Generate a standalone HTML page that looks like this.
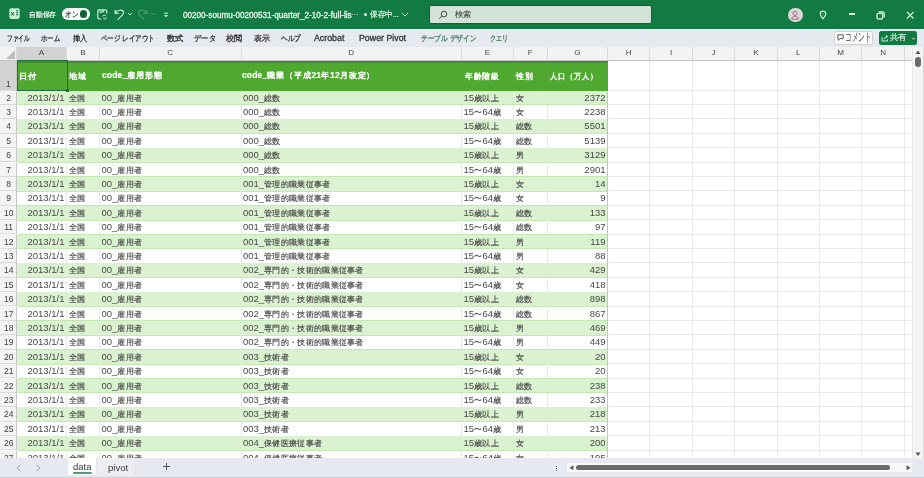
<!DOCTYPE html>
<html lang="ja"><head><meta charset="utf-8"><title>Excel</title>
<style>
*{box-sizing:border-box;margin:0;padding:0}
html,body{width:924px;height:478px;overflow:hidden;background:#fff}
body{position:relative;font-family:"Liberation Sans",sans-serif;color:#262626}
.a{position:absolute}
.t{position:absolute;white-space:nowrap;line-height:1;transform-origin:0 0}
.ch{position:absolute;top:47px;height:13.5px;background:#f3f3f4;border-right:1px solid #dadada;border-bottom:1px solid #c6c6c6;font-size:8px;color:#444;text-align:center;line-height:11.8px}
.rh{position:absolute;left:0;width:17.3px;background:#f4f4f4;border-bottom:1px solid #dadada;border-right:1px solid #c6c6c6;font-size:8.5px;color:#404040;text-align:center;padding-left:1px}
.c{position:absolute;font-size:9.5px;white-space:nowrap;overflow:hidden;line-height:14px;padding:0 2.5px 0 1.5px;color:#484848}
.c .j{font-size:8.2px;letter-spacing:0.3px;color:#444;-webkit-text-stroke:0.15px #444}
.r{text-align:right}
body{filter:blur(0.3px)}
</style></head><body>

<div class="a" style="left:0;top:0;width:924px;height:28.5px;background:#127b44"></div>
<div class="a" style="left:0;top:26.8px;width:924px;height:1.7px;background:#1b6c42"></div>
<div class="a" style="left:0;top:28.5px;width:924px;height:1.6px;background:#d6f6e7"></div>
<div class="a" style="left:0;top:30.1px;width:924px;height:16.9px;background:#e7e9f0"></div>
<svg class="a" style="left:9px;top:8.3px" width="11" height="11.2" viewBox="0 0 11 11.2"><rect x="0.3" y="0.3" width="10.4" height="10.6" rx="1.8" fill="#c4f0d4"/><path d="M2.2 4.2L4.8 7.6M4.8 4.2L2.2 7.6" stroke="#1b4f30" stroke-width="1"/><path d="M7 2.8h2.2M7 4.8h2.2M7 6.8h2.2" stroke="#1f6a40" stroke-width="1.1"/></svg>
<div class="t" style="left:29.27px;top:12.1px;font-size:7.14px;font-weight:400;color:#e3f4e8;transform:scaleX(0.97);-webkit-text-stroke:0.25px #e3f4e8">自動保存</div>
<div class="a" style="left:62px;top:8.4px;width:28px;height:11.3px;border-radius:6px;background:#fbfdfc"></div>
<div class="t" style="left:64.58px;top:10.55px;font-size:8.04px;font-weight:400;color:#2b2b2b;transform:scaleX(0.83);-webkit-text-stroke:0.15px #2b2b2b">オン</div>
<div class="a" style="left:79.6px;top:10.4px;width:7.4px;height:7.4px;border-radius:50%;background:#0f5f34"></div>
<svg class="a" style="left:97px;top:8.5px" width="11" height="11" viewBox="0 0 11 11" fill="none" stroke="#cdeed8" stroke-width="1.2"><path d="M4.2 10H2.2A1.4 1.4 0 0 1 0.8 8.6V2A1.4 1.4 0 0 1 2.2 0.8H8.4A1.4 1.4 0 0 1 9.8 2.2V4.6"/><path d="M3 1v2.4h2.2V1.2M6.6 1.2v2.2" stroke-width="1"/><path d="M5.6 7.6a1.9 1.9 0 0 1 3.4-0.6M9.6 8.4a1.9 1.9 0 0 1-3.4 0.8" stroke-width="1"/></svg>
<svg class="a" style="left:114px;top:9px" width="11" height="11" viewBox="0 0 11 11" fill="none" stroke="#cdeed8" stroke-width="1.25" stroke-linecap="round" stroke-linejoin="round"><path d="M1.2 1.3V4.3H4.2"/><path d="M1.5 4C3 1.2 8.3 -0.2 9.6 3C10.2 4.8 6 8.5 4 10.2"/></svg>
<svg class="a" style="left:127px;top:12px" width="6" height="4" viewBox="0 0 6 4" fill="none" stroke="#cdeed8" stroke-width="1"><path d="M1 1l2 2 2-2"/></svg>
<svg class="a" style="left:137px;top:9px" width="11" height="11" viewBox="0 0 11 11" fill="none" stroke="#4c9c6c" stroke-width="1.2" stroke-linecap="round" stroke-linejoin="round"><path d="M9.8 1.3V4.3H6.8"/><path d="M9.5 4C8 1.2 2.7 -0.2 1.4 3C0.8 4.8 5 8.5 7 10.2"/></svg>
<svg class="a" style="left:150px;top:12px" width="6" height="4" viewBox="0 0 6 4" fill="none" stroke="#4c9c6c" stroke-width="1"><path d="M1 1l2 2 2-2"/></svg>
<svg class="a" style="left:162.5px;top:11.5px" width="6" height="6" viewBox="0 0 6 6"><path d="M1 1.2h4" stroke="#def2e5" stroke-width="0.9"/><path d="M1 3h4L3 5.4z" fill="#def2e5"/></svg>
<div class="t" style="left:182.76px;top:11.05px;font-size:8.3px;font-weight:400;color:#e8f6ec;transform:scaleX(0.98);-webkit-text-stroke:0.3px #e8f6ec">00200-soumu-00200531-quarter_2-10-2-full-lis</div>
<div class="t" style="left:351.09px;top:9.75px;font-size:8.3px;font-weight:400;color:#e3f4e8;transform:scaleX(0.91);">···</div>
<div class="a" style="left:363.5px;top:12.8px;width:3px;height:3px;border-radius:50%;background:#e3f4e8"></div>
<div class="t" style="left:370.24px;top:10.8px;font-size:7.55px;font-weight:400;color:#e3f4e8;transform:scaleX(0.95);-webkit-text-stroke:0.2px #e3f4e8">保存中...</div>
<svg class="a" style="left:401px;top:11.5px" width="8" height="5" viewBox="0 0 8 5" fill="none" stroke="#e3f4e8" stroke-width="0.9"><path d="M1 1l3 3 3-3"/></svg>
<div class="a" style="left:429px;top:4.5px;width:222.5px;height:19.5px;background:#d3e3d8;border:1px solid #0b6434;border-radius:2px"></div>
<svg class="a" style="left:438px;top:9.5px" width="10" height="10" viewBox="0 0 10 10" fill="none" stroke="#3a3a3a" stroke-width="0.9"><circle cx="6" cy="4" r="2.8"/><path d="M4 6L1.2 8.8"/></svg>
<div class="t" style="left:455px;top:11.1px;font-size:7.89px;font-weight:400;color:#4a4a4a;transform:scaleX(1.02);-webkit-text-stroke:0.1px #4a4a4a">検索</div>
<div class="a" style="left:787.8px;top:7.6px;width:14.8px;height:14.8px;border-radius:50%;background:#dcd6d8"></div>
<svg class="a" style="left:789px;top:9px" width="12" height="12" viewBox="0 0 12 12" fill="none" stroke="#a0607e" stroke-width="0.9"><circle cx="6" cy="4.3" r="2.1"/><path d="M2.6 10.2c0.4-2 1.8-3 3.4-3s3 1 3.4 3z"/></svg>
<svg class="a" style="left:819px;top:10px" width="8" height="10" viewBox="0 0 8 10" fill="none" stroke="#cdeed8" stroke-width="1.25"><path d="M4 8.8C2.2 6.8 1.2 5.2 1.2 3.8a2.8 2.8 0 0 1 5.6 0c0 1.4-1 3-2.8 5z"/><circle cx="4" cy="3.8" r="0.5" fill="#cdeed8" stroke="none"/></svg>
<div class="a" style="left:848.6px;top:13.4px;width:6.4px;height:1.5px;background:#cdeed8"></div>
<svg class="a" style="left:876px;top:10.5px" width="9" height="9" viewBox="0 0 9 9" fill="none" stroke="#cdeed8" stroke-width="1.4"><rect x="1" y="2.4" width="5.6" height="5.6" rx="1.6"/><path d="M2.6 1h4a1.6 1.6 0 0 1 1.6 1.6v4"/></svg>
<svg class="a" style="left:905.5px;top:10.6px" width="8.5" height="8.5" viewBox="0 0 8.5 8.5" fill="none" stroke="#cdeed8" stroke-width="1.3"><path d="M1 1l6.5 6.5M7.5 1L1 7.5"/></svg>
<div class="t" style="left:7.28px;top:34.95px;font-size:8.13px;font-weight:400;color:#333;transform:scaleX(0.7);-webkit-text-stroke:0.3px #333">ファイル</div>
<div class="t" style="left:40.7px;top:34.95px;font-size:8.13px;font-weight:400;color:#333;transform:scaleX(0.8);-webkit-text-stroke:0.3px #333">ホーム</div>
<div class="t" style="left:72.92px;top:34.95px;font-size:8.13px;font-weight:400;color:#333;transform:scaleX(0.89);-webkit-text-stroke:0.3px #333">挿入</div>
<div class="t" style="left:101.3px;top:34.95px;font-size:8.13px;font-weight:400;color:#333;transform:scaleX(0.81);-webkit-text-stroke:0.3px #333">ページ レイアウト</div>
<div class="t" style="left:167.3px;top:34.95px;font-size:8.13px;font-weight:400;color:#333;transform:scaleX(1.03);-webkit-text-stroke:0.3px #333">数式</div>
<div class="t" style="left:193.97px;top:34.95px;font-size:8.13px;font-weight:400;color:#333;transform:scaleX(0.91);-webkit-text-stroke:0.3px #333">データ</div>
<div class="t" style="left:226.45px;top:34.95px;font-size:8.13px;font-weight:400;color:#333;transform:scaleX(1.01);-webkit-text-stroke:0.3px #333">校閲</div>
<div class="t" style="left:253.5px;top:34.95px;font-size:8.13px;font-weight:400;color:#333;-webkit-text-stroke:0.3px #333">表示</div>
<div class="t" style="left:280.91px;top:34.95px;font-size:8.13px;font-weight:400;color:#333;transform:scaleX(0.83);-webkit-text-stroke:0.3px #333">ヘルプ</div>
<div class="t" style="left:314.25px;top:34.4px;font-size:8.72px;font-weight:400;color:#333;transform:scaleX(1.01);-webkit-text-stroke:0.3px #333">Acrobat</div>
<div class="t" style="left:358.99px;top:34.4px;font-size:8.72px;font-weight:400;color:#333;transform:scaleX(1.01);-webkit-text-stroke:0.3px #333">Power Pivot</div>
<div class="t" style="left:420.98px;top:34.95px;font-size:8.13px;font-weight:400;color:#3d7858;transform:scaleX(0.84);-webkit-text-stroke:0.3px #3d7858">テーブル デザイン</div>
<div class="t" style="left:490.12px;top:34.95px;font-size:8.13px;font-weight:400;color:#3d7858;transform:scaleX(0.76);-webkit-text-stroke:0.3px #3d7858">クエリ</div>
<div class="a" style="left:833.5px;top:31px;width:39.5px;height:13.6px;background:#fcfcfc;border:1px solid #d2d2d2;border-radius:2.5px"></div>
<svg class="a" style="left:836.5px;top:33.5px" width="7" height="8" viewBox="0 0 7 8" fill="none" stroke="#444" stroke-width="0.9"><path d="M0.8 0.8h5.4v3.8H3L1.2 6.4V4.6H0.8z"/></svg>
<div class="t" style="left:844.93px;top:31.45px;font-size:12.18px;font-weight:400;color:#444;transform:scaleX(0.55);">コメント</div>
<div class="a" style="left:878.5px;top:31px;width:38.3px;height:13.6px;background:#107c41;border-radius:2.5px"></div>
<svg class="a" style="left:881px;top:33.5px" width="8" height="8" viewBox="0 0 8 8" fill="none" stroke="#e9f6ee" stroke-width="0.9"><path d="M1 3.2v3.8h5.6V5.4"/><path d="M3 5.2c0.3-1.6 1.4-2.6 3.4-2.6M5 1l1.6 1.6L5 4.2"/></svg>
<div class="t" style="left:890px;top:34.45px;font-size:7.52px;font-weight:400;color:#e2f3e8;transform:scaleX(1.05);-webkit-text-stroke:0.15px #e2f3e8">共有</div>
<svg class="a" style="left:910.5px;top:36.5px" width="5" height="3.5" viewBox="0 0 5 3.5" fill="none" stroke="#e9f6ee" stroke-width="0.8"><path d="M0.8 0.8l1.7 1.7 1.7-1.7"/></svg>
<div class="ch" style="left:0;width:17px"></div>
<div class="a" style="left:6.3px;top:49.5px;width:0;height:0;border-left:9.4px solid transparent;border-bottom:9.4px solid #bcbcbc"></div>
<div class="ch" style="left:17px;width:50px;background:#d2d2d2">A</div>
<div class="ch" style="left:67px;width:33px;background:#f3f3f4">B</div>
<div class="ch" style="left:100px;width:141.5px;background:#f3f3f4">C</div>
<div class="ch" style="left:241.5px;width:220.5px;background:#f3f3f4">D</div>
<div class="ch" style="left:462px;width:52px;background:#f3f3f4">E</div>
<div class="ch" style="left:514px;width:33.5px;background:#f3f3f4">F</div>
<div class="ch" style="left:547.5px;width:60.5px;background:#f3f3f4">G</div>
<div class="ch" style="left:608px;width:42.4px;background:#f3f3f4">H</div>
<div class="ch" style="left:650.4px;width:42.4px;background:#f3f3f4">I</div>
<div class="ch" style="left:692.8px;width:42.4px;background:#f3f3f4">J</div>
<div class="ch" style="left:735.2px;width:42.4px;background:#f3f3f4">K</div>
<div class="ch" style="left:777.6px;width:42.4px;background:#f3f3f4">L</div>
<div class="ch" style="left:820px;width:42.4px;background:#f3f3f4">M</div>
<div class="ch" style="left:862.4px;width:42.4px;background:#f3f3f4">N</div>
<div class="ch" style="left:904.6px;width:7.4px;border-right:none"></div>
<div class="a" style="left:17px;top:60.5px;width:895px;height:397.5px;background:#fff;overflow:hidden">
<div class="a" style="left:590px;top:0;width:1px;height:398px;background:#e9e9e9"></div>
<div class="a" style="left:632.4px;top:0;width:1px;height:398px;background:#e9e9e9"></div>
<div class="a" style="left:674.8px;top:0;width:1px;height:398px;background:#e9e9e9"></div>
<div class="a" style="left:717.2px;top:0;width:1px;height:398px;background:#e9e9e9"></div>
<div class="a" style="left:759.6px;top:0;width:1px;height:398px;background:#e9e9e9"></div>
<div class="a" style="left:802px;top:0;width:1px;height:398px;background:#e9e9e9"></div>
<div class="a" style="left:844.4px;top:0;width:1px;height:398px;background:#e9e9e9"></div>
<div class="a" style="left:886.8px;top:0;width:1px;height:398px;background:#e9e9e9"></div>
<div class="a" style="left:591px;top:29px;width:304px;height:1px;background:#e9e9e9"></div>
<div class="a" style="left:591px;top:43.4px;width:304px;height:1px;background:#e9e9e9"></div>
<div class="a" style="left:591px;top:57.8px;width:304px;height:1px;background:#e9e9e9"></div>
<div class="a" style="left:591px;top:72.2px;width:304px;height:1px;background:#e9e9e9"></div>
<div class="a" style="left:591px;top:86.6px;width:304px;height:1px;background:#e9e9e9"></div>
<div class="a" style="left:591px;top:101px;width:304px;height:1px;background:#e9e9e9"></div>
<div class="a" style="left:591px;top:115.4px;width:304px;height:1px;background:#e9e9e9"></div>
<div class="a" style="left:591px;top:129.8px;width:304px;height:1px;background:#e9e9e9"></div>
<div class="a" style="left:591px;top:144.2px;width:304px;height:1px;background:#e9e9e9"></div>
<div class="a" style="left:591px;top:158.6px;width:304px;height:1px;background:#e9e9e9"></div>
<div class="a" style="left:591px;top:173px;width:304px;height:1px;background:#e9e9e9"></div>
<div class="a" style="left:591px;top:187.4px;width:304px;height:1px;background:#e9e9e9"></div>
<div class="a" style="left:591px;top:201.8px;width:304px;height:1px;background:#e9e9e9"></div>
<div class="a" style="left:591px;top:216.2px;width:304px;height:1px;background:#e9e9e9"></div>
<div class="a" style="left:591px;top:230.6px;width:304px;height:1px;background:#e9e9e9"></div>
<div class="a" style="left:591px;top:245px;width:304px;height:1px;background:#e9e9e9"></div>
<div class="a" style="left:591px;top:259.4px;width:304px;height:1px;background:#e9e9e9"></div>
<div class="a" style="left:591px;top:273.8px;width:304px;height:1px;background:#e9e9e9"></div>
<div class="a" style="left:591px;top:288.2px;width:304px;height:1px;background:#e9e9e9"></div>
<div class="a" style="left:591px;top:302.6px;width:304px;height:1px;background:#e9e9e9"></div>
<div class="a" style="left:591px;top:317px;width:304px;height:1px;background:#e9e9e9"></div>
<div class="a" style="left:591px;top:331.4px;width:304px;height:1px;background:#e9e9e9"></div>
<div class="a" style="left:591px;top:345.8px;width:304px;height:1px;background:#e9e9e9"></div>
<div class="a" style="left:591px;top:360.2px;width:304px;height:1px;background:#e9e9e9"></div>
<div class="a" style="left:591px;top:374.6px;width:304px;height:1px;background:#e9e9e9"></div>
<div class="a" style="left:591px;top:389px;width:304px;height:1px;background:#e9e9e9"></div>
<div class="a" style="left:591px;top:403.4px;width:304px;height:1px;background:#e9e9e9"></div>
<div class="a" style="left:591px;top:417.8px;width:304px;height:1px;background:#e9e9e9"></div>
</div>
<div class="rh" style="top:60.5px;height:30px;background:#d2d2d2;line-height:1"><span class="t" style="left:6px;top:19px">1</span></div>
<div class="rh" style="top:90.5px;height:14.4px;line-height:14px">2</div>
<div class="rh" style="top:104.9px;height:14.4px;line-height:14px">3</div>
<div class="rh" style="top:119.3px;height:14.4px;line-height:14px">4</div>
<div class="rh" style="top:133.7px;height:14.4px;line-height:14px">5</div>
<div class="rh" style="top:148.1px;height:14.4px;line-height:14px">6</div>
<div class="rh" style="top:162.5px;height:14.4px;line-height:14px">7</div>
<div class="rh" style="top:176.9px;height:14.4px;line-height:14px">8</div>
<div class="rh" style="top:191.3px;height:14.4px;line-height:14px">9</div>
<div class="rh" style="top:205.7px;height:14.4px;line-height:14px">10</div>
<div class="rh" style="top:220.1px;height:14.4px;line-height:14px">11</div>
<div class="rh" style="top:234.5px;height:14.4px;line-height:14px">12</div>
<div class="rh" style="top:248.9px;height:14.4px;line-height:14px">13</div>
<div class="rh" style="top:263.3px;height:14.4px;line-height:14px">14</div>
<div class="rh" style="top:277.7px;height:14.4px;line-height:14px">15</div>
<div class="rh" style="top:292.1px;height:14.4px;line-height:14px">16</div>
<div class="rh" style="top:306.5px;height:14.4px;line-height:14px">17</div>
<div class="rh" style="top:320.9px;height:14.4px;line-height:14px">18</div>
<div class="rh" style="top:335.3px;height:14.4px;line-height:14px">19</div>
<div class="rh" style="top:349.7px;height:14.4px;line-height:14px">20</div>
<div class="rh" style="top:364.1px;height:14.4px;line-height:14px">21</div>
<div class="rh" style="top:378.5px;height:14.4px;line-height:14px">22</div>
<div class="rh" style="top:392.9px;height:14.4px;line-height:14px">23</div>
<div class="rh" style="top:407.3px;height:14.4px;line-height:14px">24</div>
<div class="rh" style="top:421.7px;height:14.4px;line-height:14px">25</div>
<div class="rh" style="top:436.1px;height:14.4px;line-height:14px">26</div>
<div class="rh" style="top:450.5px;height:14.4px;line-height:14px">27</div>
<div class="a" style="left:17px;top:60.5px;width:591px;height:30px;background:#4fa82f"></div>
<div class="a" style="left:17px;top:61px;width:591px;height:1.6px;background:#3f8f2c"></div>
<div class="t" style="left:18.76px;top:71.8px;font-size:8.6px;font-weight:700;color:#fff;transform:scaleX(1.04);-webkit-text-stroke:0.15px #fff"><span style="font-size:7.7px;letter-spacing:0.8px;font-weight:400;-webkit-text-stroke:0.45px #fff">日付</span></div>
<div class="t" style="left:68.95px;top:72.05px;font-size:8.6px;font-weight:700;color:#fff;-webkit-text-stroke:0.15px #fff"><span style="font-size:7.7px;letter-spacing:0.8px;font-weight:400;-webkit-text-stroke:0.45px #fff">地域</span></div>
<div class="t" style="left:101.95px;top:71.05px;font-size:8.6px;font-weight:700;color:#fff;transform:scaleX(1.01);-webkit-text-stroke:0.15px #fff">code_<span style="font-size:7.7px;letter-spacing:0.8px;font-weight:400;-webkit-text-stroke:0.45px #fff">雇用形態</span></div>
<div class="t" style="left:242.25px;top:71.05px;font-size:8.6px;font-weight:700;color:#fff;transform:scaleX(1.01);-webkit-text-stroke:0.15px #fff">code_<span style="font-size:7.7px;letter-spacing:0.8px;font-weight:400;-webkit-text-stroke:0.45px #fff">職業（平成</span>21<span style="font-size:7.7px;letter-spacing:0.8px;font-weight:400;-webkit-text-stroke:0.45px #fff">年</span>12<span style="font-size:7.7px;letter-spacing:0.8px;font-weight:400;-webkit-text-stroke:0.45px #fff">月改定）</span></div>
<div class="t" style="left:464.94px;top:71.8px;font-size:8.6px;font-weight:700;color:#fff;transform:scaleX(0.98);-webkit-text-stroke:0.15px #fff"><span style="font-size:7.7px;letter-spacing:0.8px;font-weight:400;-webkit-text-stroke:0.45px #fff">年齢階級</span></div>
<div class="t" style="left:516.19px;top:71.8px;font-size:8.6px;font-weight:700;color:#fff;transform:scaleX(0.98);-webkit-text-stroke:0.15px #fff"><span style="font-size:7.7px;letter-spacing:0.8px;font-weight:400;-webkit-text-stroke:0.45px #fff">性別</span></div>
<div class="t" style="left:549.72px;top:71.8px;font-size:8.6px;font-weight:700;color:#fff;transform:scaleX(0.9);-webkit-text-stroke:0.15px #fff"><span style="font-size:7.7px;letter-spacing:0.8px;font-weight:400;-webkit-text-stroke:0.45px #fff">人口（万人）</span></div>
<div class="a" style="left:17px;top:90.5px;width:591px;height:14.4px;background:#daf2d0"></div>
<div class="a" style="left:17px;top:104.4px;width:591px;height:1px;background:#c3e8b3"></div>
<div class="c r" style="left:17px;top:90.5px;width:50px">2013/1/1</div>
<div class="c " style="left:67px;top:90.5px;width:33px"><span class="j">全国</span></div>
<div class="c " style="left:100px;top:90.5px;width:141.5px">00_<span class="j">雇用者</span></div>
<div class="c " style="left:241.5px;top:90.5px;width:220.5px">000_<span class="j">総数</span></div>
<div class="c " style="left:462px;top:90.5px;width:52px">15<span class="j">歳以上</span></div>
<div class="c " style="left:514px;top:90.5px;width:33.5px"><span class="j">女</span></div>
<div class="c r" style="left:547.5px;top:90.5px;width:60.5px">2372</div>
<div class="a" style="left:66px;top:104.9px;width:1px;height:14.4px;background:#e9e9e9"></div>
<div class="a" style="left:99px;top:104.9px;width:1px;height:14.4px;background:#e9e9e9"></div>
<div class="a" style="left:240.5px;top:104.9px;width:1px;height:14.4px;background:#e9e9e9"></div>
<div class="a" style="left:461px;top:104.9px;width:1px;height:14.4px;background:#e9e9e9"></div>
<div class="a" style="left:513px;top:104.9px;width:1px;height:14.4px;background:#e9e9e9"></div>
<div class="a" style="left:546.5px;top:104.9px;width:1px;height:14.4px;background:#e9e9e9"></div>
<div class="a" style="left:17px;top:118.8px;width:591px;height:1px;background:#c3e8b3"></div>
<div class="c r" style="left:17px;top:104.9px;width:50px">2013/1/1</div>
<div class="c " style="left:67px;top:104.9px;width:33px"><span class="j">全国</span></div>
<div class="c " style="left:100px;top:104.9px;width:141.5px">00_<span class="j">雇用者</span></div>
<div class="c " style="left:241.5px;top:104.9px;width:220.5px">000_<span class="j">総数</span></div>
<div class="c " style="left:462px;top:104.9px;width:52px">15<span class="j">〜</span>64<span class="j">歳</span></div>
<div class="c " style="left:514px;top:104.9px;width:33.5px"><span class="j">女</span></div>
<div class="c r" style="left:547.5px;top:104.9px;width:60.5px">2238</div>
<div class="a" style="left:17px;top:119.3px;width:591px;height:14.4px;background:#daf2d0"></div>
<div class="a" style="left:17px;top:133.2px;width:591px;height:1px;background:#c3e8b3"></div>
<div class="c r" style="left:17px;top:119.3px;width:50px">2013/1/1</div>
<div class="c " style="left:67px;top:119.3px;width:33px"><span class="j">全国</span></div>
<div class="c " style="left:100px;top:119.3px;width:141.5px">00_<span class="j">雇用者</span></div>
<div class="c " style="left:241.5px;top:119.3px;width:220.5px">000_<span class="j">総数</span></div>
<div class="c " style="left:462px;top:119.3px;width:52px">15<span class="j">歳以上</span></div>
<div class="c " style="left:514px;top:119.3px;width:33.5px"><span class="j">総数</span></div>
<div class="c r" style="left:547.5px;top:119.3px;width:60.5px">5501</div>
<div class="a" style="left:66px;top:133.7px;width:1px;height:14.4px;background:#e9e9e9"></div>
<div class="a" style="left:99px;top:133.7px;width:1px;height:14.4px;background:#e9e9e9"></div>
<div class="a" style="left:240.5px;top:133.7px;width:1px;height:14.4px;background:#e9e9e9"></div>
<div class="a" style="left:461px;top:133.7px;width:1px;height:14.4px;background:#e9e9e9"></div>
<div class="a" style="left:513px;top:133.7px;width:1px;height:14.4px;background:#e9e9e9"></div>
<div class="a" style="left:546.5px;top:133.7px;width:1px;height:14.4px;background:#e9e9e9"></div>
<div class="a" style="left:17px;top:147.6px;width:591px;height:1px;background:#c3e8b3"></div>
<div class="c r" style="left:17px;top:133.7px;width:50px">2013/1/1</div>
<div class="c " style="left:67px;top:133.7px;width:33px"><span class="j">全国</span></div>
<div class="c " style="left:100px;top:133.7px;width:141.5px">00_<span class="j">雇用者</span></div>
<div class="c " style="left:241.5px;top:133.7px;width:220.5px">000_<span class="j">総数</span></div>
<div class="c " style="left:462px;top:133.7px;width:52px">15<span class="j">〜</span>64<span class="j">歳</span></div>
<div class="c " style="left:514px;top:133.7px;width:33.5px"><span class="j">総数</span></div>
<div class="c r" style="left:547.5px;top:133.7px;width:60.5px">5139</div>
<div class="a" style="left:17px;top:148.1px;width:591px;height:14.4px;background:#daf2d0"></div>
<div class="a" style="left:17px;top:162px;width:591px;height:1px;background:#c3e8b3"></div>
<div class="c r" style="left:17px;top:148.1px;width:50px">2013/1/1</div>
<div class="c " style="left:67px;top:148.1px;width:33px"><span class="j">全国</span></div>
<div class="c " style="left:100px;top:148.1px;width:141.5px">00_<span class="j">雇用者</span></div>
<div class="c " style="left:241.5px;top:148.1px;width:220.5px">000_<span class="j">総数</span></div>
<div class="c " style="left:462px;top:148.1px;width:52px">15<span class="j">歳以上</span></div>
<div class="c " style="left:514px;top:148.1px;width:33.5px"><span class="j">男</span></div>
<div class="c r" style="left:547.5px;top:148.1px;width:60.5px">3129</div>
<div class="a" style="left:66px;top:162.5px;width:1px;height:14.4px;background:#e9e9e9"></div>
<div class="a" style="left:99px;top:162.5px;width:1px;height:14.4px;background:#e9e9e9"></div>
<div class="a" style="left:240.5px;top:162.5px;width:1px;height:14.4px;background:#e9e9e9"></div>
<div class="a" style="left:461px;top:162.5px;width:1px;height:14.4px;background:#e9e9e9"></div>
<div class="a" style="left:513px;top:162.5px;width:1px;height:14.4px;background:#e9e9e9"></div>
<div class="a" style="left:546.5px;top:162.5px;width:1px;height:14.4px;background:#e9e9e9"></div>
<div class="a" style="left:17px;top:176.4px;width:591px;height:1px;background:#c3e8b3"></div>
<div class="c r" style="left:17px;top:162.5px;width:50px">2013/1/1</div>
<div class="c " style="left:67px;top:162.5px;width:33px"><span class="j">全国</span></div>
<div class="c " style="left:100px;top:162.5px;width:141.5px">00_<span class="j">雇用者</span></div>
<div class="c " style="left:241.5px;top:162.5px;width:220.5px">000_<span class="j">総数</span></div>
<div class="c " style="left:462px;top:162.5px;width:52px">15<span class="j">〜</span>64<span class="j">歳</span></div>
<div class="c " style="left:514px;top:162.5px;width:33.5px"><span class="j">男</span></div>
<div class="c r" style="left:547.5px;top:162.5px;width:60.5px">2901</div>
<div class="a" style="left:17px;top:176.9px;width:591px;height:14.4px;background:#daf2d0"></div>
<div class="a" style="left:17px;top:190.8px;width:591px;height:1px;background:#c3e8b3"></div>
<div class="c r" style="left:17px;top:176.9px;width:50px">2013/1/1</div>
<div class="c " style="left:67px;top:176.9px;width:33px"><span class="j">全国</span></div>
<div class="c " style="left:100px;top:176.9px;width:141.5px">00_<span class="j">雇用者</span></div>
<div class="c " style="left:241.5px;top:176.9px;width:220.5px">001_<span class="j">管理的職業従事者</span></div>
<div class="c " style="left:462px;top:176.9px;width:52px">15<span class="j">歳以上</span></div>
<div class="c " style="left:514px;top:176.9px;width:33.5px"><span class="j">女</span></div>
<div class="c r" style="left:547.5px;top:176.9px;width:60.5px">14</div>
<div class="a" style="left:66px;top:191.3px;width:1px;height:14.4px;background:#e9e9e9"></div>
<div class="a" style="left:99px;top:191.3px;width:1px;height:14.4px;background:#e9e9e9"></div>
<div class="a" style="left:240.5px;top:191.3px;width:1px;height:14.4px;background:#e9e9e9"></div>
<div class="a" style="left:461px;top:191.3px;width:1px;height:14.4px;background:#e9e9e9"></div>
<div class="a" style="left:513px;top:191.3px;width:1px;height:14.4px;background:#e9e9e9"></div>
<div class="a" style="left:546.5px;top:191.3px;width:1px;height:14.4px;background:#e9e9e9"></div>
<div class="a" style="left:17px;top:205.2px;width:591px;height:1px;background:#c3e8b3"></div>
<div class="c r" style="left:17px;top:191.3px;width:50px">2013/1/1</div>
<div class="c " style="left:67px;top:191.3px;width:33px"><span class="j">全国</span></div>
<div class="c " style="left:100px;top:191.3px;width:141.5px">00_<span class="j">雇用者</span></div>
<div class="c " style="left:241.5px;top:191.3px;width:220.5px">001_<span class="j">管理的職業従事者</span></div>
<div class="c " style="left:462px;top:191.3px;width:52px">15<span class="j">〜</span>64<span class="j">歳</span></div>
<div class="c " style="left:514px;top:191.3px;width:33.5px"><span class="j">女</span></div>
<div class="c r" style="left:547.5px;top:191.3px;width:60.5px">9</div>
<div class="a" style="left:17px;top:205.7px;width:591px;height:14.4px;background:#daf2d0"></div>
<div class="a" style="left:17px;top:219.6px;width:591px;height:1px;background:#c3e8b3"></div>
<div class="c r" style="left:17px;top:205.7px;width:50px">2013/1/1</div>
<div class="c " style="left:67px;top:205.7px;width:33px"><span class="j">全国</span></div>
<div class="c " style="left:100px;top:205.7px;width:141.5px">00_<span class="j">雇用者</span></div>
<div class="c " style="left:241.5px;top:205.7px;width:220.5px">001_<span class="j">管理的職業従事者</span></div>
<div class="c " style="left:462px;top:205.7px;width:52px">15<span class="j">歳以上</span></div>
<div class="c " style="left:514px;top:205.7px;width:33.5px"><span class="j">総数</span></div>
<div class="c r" style="left:547.5px;top:205.7px;width:60.5px">133</div>
<div class="a" style="left:66px;top:220.1px;width:1px;height:14.4px;background:#e9e9e9"></div>
<div class="a" style="left:99px;top:220.1px;width:1px;height:14.4px;background:#e9e9e9"></div>
<div class="a" style="left:240.5px;top:220.1px;width:1px;height:14.4px;background:#e9e9e9"></div>
<div class="a" style="left:461px;top:220.1px;width:1px;height:14.4px;background:#e9e9e9"></div>
<div class="a" style="left:513px;top:220.1px;width:1px;height:14.4px;background:#e9e9e9"></div>
<div class="a" style="left:546.5px;top:220.1px;width:1px;height:14.4px;background:#e9e9e9"></div>
<div class="a" style="left:17px;top:234px;width:591px;height:1px;background:#c3e8b3"></div>
<div class="c r" style="left:17px;top:220.1px;width:50px">2013/1/1</div>
<div class="c " style="left:67px;top:220.1px;width:33px"><span class="j">全国</span></div>
<div class="c " style="left:100px;top:220.1px;width:141.5px">00_<span class="j">雇用者</span></div>
<div class="c " style="left:241.5px;top:220.1px;width:220.5px">001_<span class="j">管理的職業従事者</span></div>
<div class="c " style="left:462px;top:220.1px;width:52px">15<span class="j">〜</span>64<span class="j">歳</span></div>
<div class="c " style="left:514px;top:220.1px;width:33.5px"><span class="j">総数</span></div>
<div class="c r" style="left:547.5px;top:220.1px;width:60.5px">97</div>
<div class="a" style="left:17px;top:234.5px;width:591px;height:14.4px;background:#daf2d0"></div>
<div class="a" style="left:17px;top:248.4px;width:591px;height:1px;background:#c3e8b3"></div>
<div class="c r" style="left:17px;top:234.5px;width:50px">2013/1/1</div>
<div class="c " style="left:67px;top:234.5px;width:33px"><span class="j">全国</span></div>
<div class="c " style="left:100px;top:234.5px;width:141.5px">00_<span class="j">雇用者</span></div>
<div class="c " style="left:241.5px;top:234.5px;width:220.5px">001_<span class="j">管理的職業従事者</span></div>
<div class="c " style="left:462px;top:234.5px;width:52px">15<span class="j">歳以上</span></div>
<div class="c " style="left:514px;top:234.5px;width:33.5px"><span class="j">男</span></div>
<div class="c r" style="left:547.5px;top:234.5px;width:60.5px">119</div>
<div class="a" style="left:66px;top:248.9px;width:1px;height:14.4px;background:#e9e9e9"></div>
<div class="a" style="left:99px;top:248.9px;width:1px;height:14.4px;background:#e9e9e9"></div>
<div class="a" style="left:240.5px;top:248.9px;width:1px;height:14.4px;background:#e9e9e9"></div>
<div class="a" style="left:461px;top:248.9px;width:1px;height:14.4px;background:#e9e9e9"></div>
<div class="a" style="left:513px;top:248.9px;width:1px;height:14.4px;background:#e9e9e9"></div>
<div class="a" style="left:546.5px;top:248.9px;width:1px;height:14.4px;background:#e9e9e9"></div>
<div class="a" style="left:17px;top:262.8px;width:591px;height:1px;background:#c3e8b3"></div>
<div class="c r" style="left:17px;top:248.9px;width:50px">2013/1/1</div>
<div class="c " style="left:67px;top:248.9px;width:33px"><span class="j">全国</span></div>
<div class="c " style="left:100px;top:248.9px;width:141.5px">00_<span class="j">雇用者</span></div>
<div class="c " style="left:241.5px;top:248.9px;width:220.5px">001_<span class="j">管理的職業従事者</span></div>
<div class="c " style="left:462px;top:248.9px;width:52px">15<span class="j">〜</span>64<span class="j">歳</span></div>
<div class="c " style="left:514px;top:248.9px;width:33.5px"><span class="j">男</span></div>
<div class="c r" style="left:547.5px;top:248.9px;width:60.5px">88</div>
<div class="a" style="left:17px;top:263.3px;width:591px;height:14.4px;background:#daf2d0"></div>
<div class="a" style="left:17px;top:277.2px;width:591px;height:1px;background:#c3e8b3"></div>
<div class="c r" style="left:17px;top:263.3px;width:50px">2013/1/1</div>
<div class="c " style="left:67px;top:263.3px;width:33px"><span class="j">全国</span></div>
<div class="c " style="left:100px;top:263.3px;width:141.5px">00_<span class="j">雇用者</span></div>
<div class="c " style="left:241.5px;top:263.3px;width:220.5px">002_<span class="j">専門的・技術的職業従事者</span></div>
<div class="c " style="left:462px;top:263.3px;width:52px">15<span class="j">歳以上</span></div>
<div class="c " style="left:514px;top:263.3px;width:33.5px"><span class="j">女</span></div>
<div class="c r" style="left:547.5px;top:263.3px;width:60.5px">429</div>
<div class="a" style="left:66px;top:277.7px;width:1px;height:14.4px;background:#e9e9e9"></div>
<div class="a" style="left:99px;top:277.7px;width:1px;height:14.4px;background:#e9e9e9"></div>
<div class="a" style="left:240.5px;top:277.7px;width:1px;height:14.4px;background:#e9e9e9"></div>
<div class="a" style="left:461px;top:277.7px;width:1px;height:14.4px;background:#e9e9e9"></div>
<div class="a" style="left:513px;top:277.7px;width:1px;height:14.4px;background:#e9e9e9"></div>
<div class="a" style="left:546.5px;top:277.7px;width:1px;height:14.4px;background:#e9e9e9"></div>
<div class="a" style="left:17px;top:291.6px;width:591px;height:1px;background:#c3e8b3"></div>
<div class="c r" style="left:17px;top:277.7px;width:50px">2013/1/1</div>
<div class="c " style="left:67px;top:277.7px;width:33px"><span class="j">全国</span></div>
<div class="c " style="left:100px;top:277.7px;width:141.5px">00_<span class="j">雇用者</span></div>
<div class="c " style="left:241.5px;top:277.7px;width:220.5px">002_<span class="j">専門的・技術的職業従事者</span></div>
<div class="c " style="left:462px;top:277.7px;width:52px">15<span class="j">〜</span>64<span class="j">歳</span></div>
<div class="c " style="left:514px;top:277.7px;width:33.5px"><span class="j">女</span></div>
<div class="c r" style="left:547.5px;top:277.7px;width:60.5px">418</div>
<div class="a" style="left:17px;top:292.1px;width:591px;height:14.4px;background:#daf2d0"></div>
<div class="a" style="left:17px;top:306px;width:591px;height:1px;background:#c3e8b3"></div>
<div class="c r" style="left:17px;top:292.1px;width:50px">2013/1/1</div>
<div class="c " style="left:67px;top:292.1px;width:33px"><span class="j">全国</span></div>
<div class="c " style="left:100px;top:292.1px;width:141.5px">00_<span class="j">雇用者</span></div>
<div class="c " style="left:241.5px;top:292.1px;width:220.5px">002_<span class="j">専門的・技術的職業従事者</span></div>
<div class="c " style="left:462px;top:292.1px;width:52px">15<span class="j">歳以上</span></div>
<div class="c " style="left:514px;top:292.1px;width:33.5px"><span class="j">総数</span></div>
<div class="c r" style="left:547.5px;top:292.1px;width:60.5px">898</div>
<div class="a" style="left:66px;top:306.5px;width:1px;height:14.4px;background:#e9e9e9"></div>
<div class="a" style="left:99px;top:306.5px;width:1px;height:14.4px;background:#e9e9e9"></div>
<div class="a" style="left:240.5px;top:306.5px;width:1px;height:14.4px;background:#e9e9e9"></div>
<div class="a" style="left:461px;top:306.5px;width:1px;height:14.4px;background:#e9e9e9"></div>
<div class="a" style="left:513px;top:306.5px;width:1px;height:14.4px;background:#e9e9e9"></div>
<div class="a" style="left:546.5px;top:306.5px;width:1px;height:14.4px;background:#e9e9e9"></div>
<div class="a" style="left:17px;top:320.4px;width:591px;height:1px;background:#c3e8b3"></div>
<div class="c r" style="left:17px;top:306.5px;width:50px">2013/1/1</div>
<div class="c " style="left:67px;top:306.5px;width:33px"><span class="j">全国</span></div>
<div class="c " style="left:100px;top:306.5px;width:141.5px">00_<span class="j">雇用者</span></div>
<div class="c " style="left:241.5px;top:306.5px;width:220.5px">002_<span class="j">専門的・技術的職業従事者</span></div>
<div class="c " style="left:462px;top:306.5px;width:52px">15<span class="j">〜</span>64<span class="j">歳</span></div>
<div class="c " style="left:514px;top:306.5px;width:33.5px"><span class="j">総数</span></div>
<div class="c r" style="left:547.5px;top:306.5px;width:60.5px">867</div>
<div class="a" style="left:17px;top:320.9px;width:591px;height:14.4px;background:#daf2d0"></div>
<div class="a" style="left:17px;top:334.8px;width:591px;height:1px;background:#c3e8b3"></div>
<div class="c r" style="left:17px;top:320.9px;width:50px">2013/1/1</div>
<div class="c " style="left:67px;top:320.9px;width:33px"><span class="j">全国</span></div>
<div class="c " style="left:100px;top:320.9px;width:141.5px">00_<span class="j">雇用者</span></div>
<div class="c " style="left:241.5px;top:320.9px;width:220.5px">002_<span class="j">専門的・技術的職業従事者</span></div>
<div class="c " style="left:462px;top:320.9px;width:52px">15<span class="j">歳以上</span></div>
<div class="c " style="left:514px;top:320.9px;width:33.5px"><span class="j">男</span></div>
<div class="c r" style="left:547.5px;top:320.9px;width:60.5px">469</div>
<div class="a" style="left:66px;top:335.3px;width:1px;height:14.4px;background:#e9e9e9"></div>
<div class="a" style="left:99px;top:335.3px;width:1px;height:14.4px;background:#e9e9e9"></div>
<div class="a" style="left:240.5px;top:335.3px;width:1px;height:14.4px;background:#e9e9e9"></div>
<div class="a" style="left:461px;top:335.3px;width:1px;height:14.4px;background:#e9e9e9"></div>
<div class="a" style="left:513px;top:335.3px;width:1px;height:14.4px;background:#e9e9e9"></div>
<div class="a" style="left:546.5px;top:335.3px;width:1px;height:14.4px;background:#e9e9e9"></div>
<div class="a" style="left:17px;top:349.2px;width:591px;height:1px;background:#c3e8b3"></div>
<div class="c r" style="left:17px;top:335.3px;width:50px">2013/1/1</div>
<div class="c " style="left:67px;top:335.3px;width:33px"><span class="j">全国</span></div>
<div class="c " style="left:100px;top:335.3px;width:141.5px">00_<span class="j">雇用者</span></div>
<div class="c " style="left:241.5px;top:335.3px;width:220.5px">002_<span class="j">専門的・技術的職業従事者</span></div>
<div class="c " style="left:462px;top:335.3px;width:52px">15<span class="j">〜</span>64<span class="j">歳</span></div>
<div class="c " style="left:514px;top:335.3px;width:33.5px"><span class="j">男</span></div>
<div class="c r" style="left:547.5px;top:335.3px;width:60.5px">449</div>
<div class="a" style="left:17px;top:349.7px;width:591px;height:14.4px;background:#daf2d0"></div>
<div class="a" style="left:17px;top:363.6px;width:591px;height:1px;background:#c3e8b3"></div>
<div class="c r" style="left:17px;top:349.7px;width:50px">2013/1/1</div>
<div class="c " style="left:67px;top:349.7px;width:33px"><span class="j">全国</span></div>
<div class="c " style="left:100px;top:349.7px;width:141.5px">00_<span class="j">雇用者</span></div>
<div class="c " style="left:241.5px;top:349.7px;width:220.5px">003_<span class="j">技術者</span></div>
<div class="c " style="left:462px;top:349.7px;width:52px">15<span class="j">歳以上</span></div>
<div class="c " style="left:514px;top:349.7px;width:33.5px"><span class="j">女</span></div>
<div class="c r" style="left:547.5px;top:349.7px;width:60.5px">20</div>
<div class="a" style="left:66px;top:364.1px;width:1px;height:14.4px;background:#e9e9e9"></div>
<div class="a" style="left:99px;top:364.1px;width:1px;height:14.4px;background:#e9e9e9"></div>
<div class="a" style="left:240.5px;top:364.1px;width:1px;height:14.4px;background:#e9e9e9"></div>
<div class="a" style="left:461px;top:364.1px;width:1px;height:14.4px;background:#e9e9e9"></div>
<div class="a" style="left:513px;top:364.1px;width:1px;height:14.4px;background:#e9e9e9"></div>
<div class="a" style="left:546.5px;top:364.1px;width:1px;height:14.4px;background:#e9e9e9"></div>
<div class="a" style="left:17px;top:378px;width:591px;height:1px;background:#c3e8b3"></div>
<div class="c r" style="left:17px;top:364.1px;width:50px">2013/1/1</div>
<div class="c " style="left:67px;top:364.1px;width:33px"><span class="j">全国</span></div>
<div class="c " style="left:100px;top:364.1px;width:141.5px">00_<span class="j">雇用者</span></div>
<div class="c " style="left:241.5px;top:364.1px;width:220.5px">003_<span class="j">技術者</span></div>
<div class="c " style="left:462px;top:364.1px;width:52px">15<span class="j">〜</span>64<span class="j">歳</span></div>
<div class="c " style="left:514px;top:364.1px;width:33.5px"><span class="j">女</span></div>
<div class="c r" style="left:547.5px;top:364.1px;width:60.5px">20</div>
<div class="a" style="left:17px;top:378.5px;width:591px;height:14.4px;background:#daf2d0"></div>
<div class="a" style="left:17px;top:392.4px;width:591px;height:1px;background:#c3e8b3"></div>
<div class="c r" style="left:17px;top:378.5px;width:50px">2013/1/1</div>
<div class="c " style="left:67px;top:378.5px;width:33px"><span class="j">全国</span></div>
<div class="c " style="left:100px;top:378.5px;width:141.5px">00_<span class="j">雇用者</span></div>
<div class="c " style="left:241.5px;top:378.5px;width:220.5px">003_<span class="j">技術者</span></div>
<div class="c " style="left:462px;top:378.5px;width:52px">15<span class="j">歳以上</span></div>
<div class="c " style="left:514px;top:378.5px;width:33.5px"><span class="j">総数</span></div>
<div class="c r" style="left:547.5px;top:378.5px;width:60.5px">238</div>
<div class="a" style="left:66px;top:392.9px;width:1px;height:14.4px;background:#e9e9e9"></div>
<div class="a" style="left:99px;top:392.9px;width:1px;height:14.4px;background:#e9e9e9"></div>
<div class="a" style="left:240.5px;top:392.9px;width:1px;height:14.4px;background:#e9e9e9"></div>
<div class="a" style="left:461px;top:392.9px;width:1px;height:14.4px;background:#e9e9e9"></div>
<div class="a" style="left:513px;top:392.9px;width:1px;height:14.4px;background:#e9e9e9"></div>
<div class="a" style="left:546.5px;top:392.9px;width:1px;height:14.4px;background:#e9e9e9"></div>
<div class="a" style="left:17px;top:406.8px;width:591px;height:1px;background:#c3e8b3"></div>
<div class="c r" style="left:17px;top:392.9px;width:50px">2013/1/1</div>
<div class="c " style="left:67px;top:392.9px;width:33px"><span class="j">全国</span></div>
<div class="c " style="left:100px;top:392.9px;width:141.5px">00_<span class="j">雇用者</span></div>
<div class="c " style="left:241.5px;top:392.9px;width:220.5px">003_<span class="j">技術者</span></div>
<div class="c " style="left:462px;top:392.9px;width:52px">15<span class="j">〜</span>64<span class="j">歳</span></div>
<div class="c " style="left:514px;top:392.9px;width:33.5px"><span class="j">総数</span></div>
<div class="c r" style="left:547.5px;top:392.9px;width:60.5px">233</div>
<div class="a" style="left:17px;top:407.3px;width:591px;height:14.4px;background:#daf2d0"></div>
<div class="a" style="left:17px;top:421.2px;width:591px;height:1px;background:#c3e8b3"></div>
<div class="c r" style="left:17px;top:407.3px;width:50px">2013/1/1</div>
<div class="c " style="left:67px;top:407.3px;width:33px"><span class="j">全国</span></div>
<div class="c " style="left:100px;top:407.3px;width:141.5px">00_<span class="j">雇用者</span></div>
<div class="c " style="left:241.5px;top:407.3px;width:220.5px">003_<span class="j">技術者</span></div>
<div class="c " style="left:462px;top:407.3px;width:52px">15<span class="j">歳以上</span></div>
<div class="c " style="left:514px;top:407.3px;width:33.5px"><span class="j">男</span></div>
<div class="c r" style="left:547.5px;top:407.3px;width:60.5px">218</div>
<div class="a" style="left:66px;top:421.7px;width:1px;height:14.4px;background:#e9e9e9"></div>
<div class="a" style="left:99px;top:421.7px;width:1px;height:14.4px;background:#e9e9e9"></div>
<div class="a" style="left:240.5px;top:421.7px;width:1px;height:14.4px;background:#e9e9e9"></div>
<div class="a" style="left:461px;top:421.7px;width:1px;height:14.4px;background:#e9e9e9"></div>
<div class="a" style="left:513px;top:421.7px;width:1px;height:14.4px;background:#e9e9e9"></div>
<div class="a" style="left:546.5px;top:421.7px;width:1px;height:14.4px;background:#e9e9e9"></div>
<div class="a" style="left:17px;top:435.6px;width:591px;height:1px;background:#c3e8b3"></div>
<div class="c r" style="left:17px;top:421.7px;width:50px">2013/1/1</div>
<div class="c " style="left:67px;top:421.7px;width:33px"><span class="j">全国</span></div>
<div class="c " style="left:100px;top:421.7px;width:141.5px">00_<span class="j">雇用者</span></div>
<div class="c " style="left:241.5px;top:421.7px;width:220.5px">003_<span class="j">技術者</span></div>
<div class="c " style="left:462px;top:421.7px;width:52px">15<span class="j">〜</span>64<span class="j">歳</span></div>
<div class="c " style="left:514px;top:421.7px;width:33.5px"><span class="j">男</span></div>
<div class="c r" style="left:547.5px;top:421.7px;width:60.5px">213</div>
<div class="a" style="left:17px;top:436.1px;width:591px;height:14.4px;background:#daf2d0"></div>
<div class="a" style="left:17px;top:450px;width:591px;height:1px;background:#c3e8b3"></div>
<div class="c r" style="left:17px;top:436.1px;width:50px">2013/1/1</div>
<div class="c " style="left:67px;top:436.1px;width:33px"><span class="j">全国</span></div>
<div class="c " style="left:100px;top:436.1px;width:141.5px">00_<span class="j">雇用者</span></div>
<div class="c " style="left:241.5px;top:436.1px;width:220.5px">004_<span class="j">保健医療従事者</span></div>
<div class="c " style="left:462px;top:436.1px;width:52px">15<span class="j">歳以上</span></div>
<div class="c " style="left:514px;top:436.1px;width:33.5px"><span class="j">女</span></div>
<div class="c r" style="left:547.5px;top:436.1px;width:60.5px">200</div>
<div class="a" style="left:66px;top:450.5px;width:1px;height:14.4px;background:#e9e9e9"></div>
<div class="a" style="left:99px;top:450.5px;width:1px;height:14.4px;background:#e9e9e9"></div>
<div class="a" style="left:240.5px;top:450.5px;width:1px;height:14.4px;background:#e9e9e9"></div>
<div class="a" style="left:461px;top:450.5px;width:1px;height:14.4px;background:#e9e9e9"></div>
<div class="a" style="left:513px;top:450.5px;width:1px;height:14.4px;background:#e9e9e9"></div>
<div class="a" style="left:546.5px;top:450.5px;width:1px;height:14.4px;background:#e9e9e9"></div>
<div class="a" style="left:17px;top:464.4px;width:591px;height:1px;background:#c3e8b3"></div>
<div class="c r" style="left:17px;top:450.5px;width:50px">2013/1/1</div>
<div class="c " style="left:67px;top:450.5px;width:33px"><span class="j">全国</span></div>
<div class="c " style="left:100px;top:450.5px;width:141.5px">00_<span class="j">雇用者</span></div>
<div class="c " style="left:241.5px;top:450.5px;width:220.5px">004_<span class="j">保健医療従事者</span></div>
<div class="c " style="left:462px;top:450.5px;width:52px">15<span class="j">〜</span>64<span class="j">歳</span></div>
<div class="c " style="left:514px;top:450.5px;width:33.5px"><span class="j">女</span></div>
<div class="c r" style="left:547.5px;top:450.5px;width:60.5px">195</div>
<div class="a" style="left:606.8px;top:90.5px;width:1.2px;height:367.5px;background:#a6dd92"></div>
<div class="a" style="left:16.5px;top:60px;width:51px;height:31px;border:1.3px solid #1f6e3c"></div>
<div class="a" style="left:65.8px;top:89.2px;width:3px;height:3px;background:#1f6e3c"></div>
<div class="a" style="left:912px;top:47px;width:12px;height:411px;background:#f4f4f4;border-left:1px solid #e6e6e6;border-right:1px solid #d8d8d8"></div>
<svg class="a" style="left:915px;top:50px" width="6" height="4.5" viewBox="0 0 6 4.5"><path d="M0.5 4L3 0.5 5.5 4z" fill="#555"/></svg>
<div class="a" style="left:915.2px;top:57.2px;width:5.6px;height:9.4px;border-radius:3px;background:#6a6a6a"></div>
<svg class="a" style="left:915px;top:452px" width="6" height="4.5" viewBox="0 0 6 4.5"><path d="M0.5 0.5L3 4 5.5 0.5z" fill="#555"/></svg>
<div class="a" style="left:0;top:458px;width:924px;height:18.8px;background:#e7e9f0"></div>
<div class="a" style="left:0;top:476.8px;width:924px;height:1.2px;background:#cfd1d6"></div>
<svg class="a" style="left:15px;top:464px" width="8" height="8" viewBox="0 0 8 8" fill="none" stroke="#9a9a9a" stroke-width="0.9"><path d="M5.5 0.8L2 4l3.5 3.2"/></svg>
<svg class="a" style="left:33.5px;top:464px" width="8" height="8" viewBox="0 0 8 8" fill="none" stroke="#9a9a9a" stroke-width="0.9"><path d="M2.5 0.8L6 4l-3.5 3.2"/></svg>
<div class="a" style="left:68.4px;top:458px;width:28px;height:16.8px;background:#fff"></div>
<div class="t" style="left:72.74px;top:462.5px;font-size:9px;font-weight:400;color:#3a3a3a;transform:scaleX(1.05);">data</div>
<div class="a" style="left:73px;top:472.2px;width:18.8px;height:1.4px;background:#4f9a72;border-radius:1px"></div>
<div class="a" style="left:97.5px;top:458px;width:38.5px;height:17px;background:#eceef1;border-right:1px solid #e0e2e6"></div>
<div class="t" style="left:108.07px;top:463.7px;font-size:9px;font-weight:400;color:#3a3a3a;transform:scaleX(1.06);">pivot</div>
<div class="a" style="left:162.6px;top:466.4px;width:7.1px;height:1px;background:#555"></div>
<div class="a" style="left:165.6px;top:463.4px;width:1px;height:7.1px;background:#555"></div>
<div class="a" style="left:555.8px;top:465.5px;width:1.6px;height:1.6px;background:#333;border-radius:50%"></div>
<div class="a" style="left:555.8px;top:467.6px;width:1.6px;height:1.6px;background:#333;border-radius:50%"></div>
<div class="a" style="left:555.8px;top:469.7px;width:1.6px;height:1.6px;background:#333;border-radius:50%"></div>
<div class="a" style="left:566.6px;top:462.8px;width:345.4px;height:9.7px;background:#f8f8f8"></div>
<svg class="a" style="left:568.5px;top:464.8px" width="5" height="5.5" viewBox="0 0 5 5.5"><path d="M4.5 0.3L0.5 2.75 4.5 5.2z" fill="#555"/></svg>
<div class="a" style="left:576px;top:464.7px;width:314px;height:5.3px;border-radius:3px;background:#6a6a6a"></div>
<svg class="a" style="left:905.5px;top:465px" width="5" height="5.5" viewBox="0 0 5 5.5"><path d="M0.5 0.3L4.5 2.75 0.5 5.2z" fill="#555"/></svg>
</body></html>
